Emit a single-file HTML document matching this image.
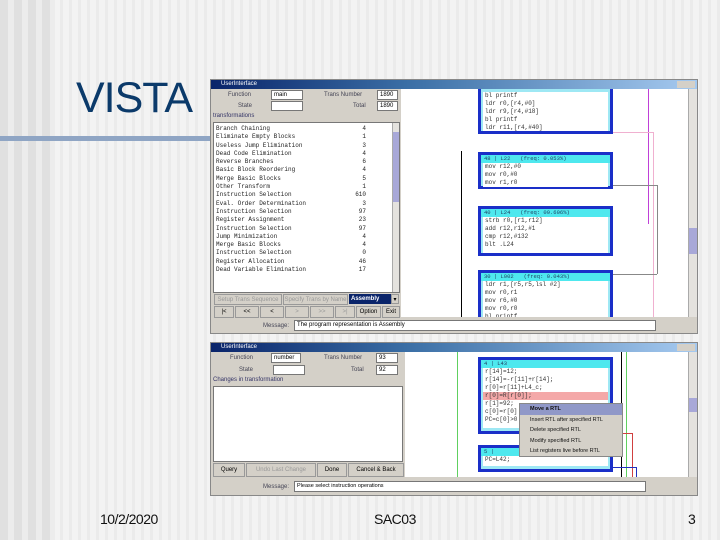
<!DOCTYPE html>
<html><head><meta charset="utf-8"><style>
*{margin:0;padding:0;box-sizing:border-box}
body{width:720px;height:540px;overflow:hidden;position:relative;font-family:"Liberation Sans",sans-serif;
background:repeating-linear-gradient(90deg,#f3f3f3 0 6px,#ebebeb 6px 9px);}
.lstrip{position:absolute;left:0;top:0;width:55px;height:540px;background:repeating-linear-gradient(90deg,#e0e0e0 0 8px,#ececec 8px 14px)}
.a{position:absolute}
.win{position:absolute;background:#d4d0c8;border:1px solid #888}
.tb{position:absolute;left:0;right:0;top:0;height:9px;background:linear-gradient(90deg,#0a246a,#3a6ea5 40%,#a6caf0);color:#fff;font-size:6px;line-height:9px;padding-left:10px}
.lb{position:absolute;font-size:6px;color:#445;white-space:nowrap}
.box{position:absolute;background:#fff;border:1px solid #777;font-size:6px;line-height:9px;padding-left:2px}
.list{position:absolute;background:#fff;border:1px solid #777;font-family:"Liberation Mono",monospace;font-size:6px;line-height:8.3px;color:#222;padding:2px 0 0 2px;overflow:hidden}
.list div{display:flex;justify-content:space-between;width:150px}
.sb{position:absolute;background:#e4e2de;border-left:1px solid #aaa}
.btn{position:absolute;background:#d4d0c8;border:1px solid #999;font-size:6px;text-align:center;color:#999;line-height:10px}
.blk{position:absolute;border:3px solid #1a2fc8;background:#9ee8f4}
.blk .h{height:8px;background:#4ee8ee;font-size:5.5px;color:#246;line-height:8px;padding-left:3px;font-family:"Liberation Mono",monospace}
.blk .c{background:#fff;font-family:"Liberation Mono",monospace;font-size:6px;line-height:8px;color:#333;padding-left:2px;margin:0 2px 2px}
</style></head><body>
<div class="lstrip"></div>
<div class="a" style="left:76px;top:74px;font-size:43px;color:#0b3a6a;letter-spacing:-1px">VISTA</div>
<div class="a" style="left:0;top:136px;width:211px;height:5px;background:#8fa5c4"></div>

<!-- TOP WINDOW -->
<div class="win" style="left:210px;top:79px;width:488px;height:255px">
<div class="tb">UserInterface<span style="position:absolute;right:2px;top:1px;width:18px;height:7px;background:#d4d0c8"></span></div>
<div class="lb" style="left:17px;top:12px">Function</div><div class="box" style="left:60px;top:10px;width:32px;height:10px">main</div>
<div class="lb" style="left:113px;top:12px">Trans Number</div><div class="box" style="left:166px;top:10px;width:21px;height:10px">1890</div>
<div class="lb" style="left:27px;top:23px">State</div><div class="box" style="left:60px;top:21px;width:32px;height:10px"></div>
<div class="lb" style="left:142px;top:23px">Total</div><div class="box" style="left:166px;top:21px;width:21px;height:10px">1890</div>
<div class="lb" style="left:2px;top:33px;color:#336">transformations</div>
<div class="list" style="left:2px;top:42px;width:187px;height:171px">
<div><span>Branch Chaining</span><span>4</span></div><div><span>Eliminate Empty Blocks</span><span>1</span></div><div><span>Useless Jump Elimination</span><span>3</span></div><div><span>Dead Code Elimination</span><span>4</span></div><div><span>Reverse Branches</span><span>6</span></div><div><span>Basic Block Reordering</span><span>4</span></div><div><span>Merge Basic Blocks</span><span>5</span></div><div><span>Other Transform</span><span>1</span></div><div><span>Instruction Selection</span><span>610</span></div><div><span>Eval. Order Determination</span><span>3</span></div><div><span>Instruction Selection</span><span>97</span></div><div><span>Register Assignment</span><span>23</span></div><div><span>Instruction Selection</span><span>97</span></div><div><span>Jump Minimization</span><span>4</span></div><div><span>Merge Basic Blocks</span><span>4</span></div><div><span>Instruction Selection</span><span>0</span></div><div><span>Register Allocation</span><span>46</span></div><div><span>Dead Variable Elimination</span><span>17</span></div>
</div>
<div class="sb" style="left:181px;top:43px;width:7px;height:169px"><div style="position:absolute;top:9px;left:0;width:6px;height:70px;background:#a8a8d8"></div></div>
<div class="btn" style="left:3px;top:214px;width:68px;height:11px">Setup Trans Sequence</div>
<div class="btn" style="left:72px;top:214px;width:65px;height:11px">Specify Trans by Name</div>
<div class="a" style="left:138px;top:214px;width:42px;height:10px;background:#0a246a;color:#fff;font-size:6px;font-weight:bold;line-height:10px;padding-left:2px">Assembly</div>
<div class="btn" style="left:180px;top:214px;width:8px;height:10px;color:#000">▾</div>
<div class="btn" style="left:3px;top:226px;width:20px;height:12px;color:#000">|&lt;</div>
<div class="btn" style="left:24px;top:226px;width:24px;height:12px;color:#000">&lt;&lt;</div>
<div class="btn" style="left:49px;top:226px;width:24px;height:12px;color:#000">&lt;</div>
<div class="btn" style="left:74px;top:226px;width:24px;height:12px">&gt;</div>
<div class="btn" style="left:99px;top:226px;width:24px;height:12px">&gt;&gt;</div>
<div class="btn" style="left:124px;top:226px;width:20px;height:12px">&gt;|</div>
<div class="btn" style="left:145px;top:226px;width:25px;height:12px;color:#000">Option</div>
<div class="btn" style="left:171px;top:226px;width:18px;height:12px;color:#000">Exit</div>
<div class="lb" style="left:52px;top:243px">Message:</div>
<div class="box" style="left:83px;top:240px;width:362px;height:11px;font-size:6px">The program representation is Assembly</div>
<!-- graph -->
<div class="a" style="left:190px;top:9px;width:287px;height:228px;background:#fff;overflow:hidden">
 <div class="a" style="left:60px;top:62px;width:1px;height:170px;background:#000"></div>
 <div class="a" style="left:247px;top:0;width:1px;height:135px;background:#c040d8"></div>
 <div class="a" style="left:77px;top:43px;width:175px;height:1px;background:#f0b0d0"></div>
 <div class="a" style="left:252px;top:43px;width:1px;height:190px;background:#f0b0d0"></div>
 <div class="a" style="left:200px;top:96px;width:56px;height:1px;background:#888"></div>
 <div class="a" style="left:256px;top:96px;width:1px;height:89px;background:#888"></div>
 <div class="a" style="left:200px;top:185px;width:56px;height:1px;background:#888"></div>
 <div class="a" style="left:200px;top:123px;width:12px;height:41px;border:1px solid #000;border-left:none"></div>
 <div class="blk" style="left:77px;top:-3px;width:135px;height:48px"><div class="c" style="margin-top:3px;height:39px">bl printf<br>ldr r0,[r4,#0]<br>ldr r9,[r4,#18]<br>bl printf<br>ldr r11,[r4,#40]</div></div>
 <div class="blk" style="left:77px;top:63px;width:135px;height:37px"><div class="h">48 | L22 &nbsp; (freq: 0.053%)</div><div class="c" style="height:24px">mov r12,#0<br>mov r0,#0<br>mov r1,r0</div></div>
 <div class="blk" style="left:77px;top:117px;width:135px;height:50px"><div class="h">40 | L24 &nbsp; (freq: 09.606%)</div><div class="c" style="height:36px">strb r0,[r1,r12]<br>add r12,r12,#1<br>cmp r12,#132<br>blt .L24</div></div>
 <div class="blk" style="left:77px;top:181px;width:135px;height:60px"><div class="h">30 | L002 &nbsp; (freq: 0.043%)</div><div class="c" style="height:48px">ldr r1,[r5,r5,lsl #2]<br>mov r0,r1<br>mov r6,#0<br>mov r0,r0<br>bl printf</div></div>
</div>
<div class="sb" style="left:477px;top:9px;width:9px;height:228px"><div style="position:absolute;top:139px;width:8px;height:26px;background:#a8a8d8"></div></div>
</div>

<!-- BOTTOM WINDOW -->
<div class="win" style="left:210px;top:342px;width:488px;height:154px">
<div class="tb">UserInterface<span style="position:absolute;right:2px;top:1px;width:18px;height:7px;background:#d4d0c8"></span></div>
<div class="lb" style="left:19px;top:12px">Function</div><div class="box" style="left:60px;top:10px;width:30px;height:10px">number</div>
<div class="lb" style="left:113px;top:12px">Trans Number</div><div class="box" style="left:165px;top:10px;width:22px;height:10px">93</div>
<div class="lb" style="left:28px;top:24px">State</div><div class="box" style="left:62px;top:22px;width:32px;height:10px"></div>
<div class="lb" style="left:140px;top:24px">Total</div><div class="box" style="left:165px;top:22px;width:22px;height:10px">92</div>
<div class="lb" style="left:2px;top:34px;color:#336">Changes in transformation</div>
<div class="a" style="left:2px;top:43px;width:190px;height:76px;background:#fff;border:1px solid #777"></div>
<div class="btn" style="left:2px;top:120px;width:32px;height:14px;color:#000;line-height:13px">Query</div>
<div class="btn" style="left:35px;top:120px;width:70px;height:14px;line-height:13px">Undo Last Change</div>
<div class="btn" style="left:106px;top:120px;width:30px;height:14px;color:#000;line-height:13px">Done</div>
<div class="btn" style="left:137px;top:120px;width:56px;height:14px;color:#000;line-height:13px">Cancel &amp; Back</div>
<div class="lb" style="left:52px;top:141px">Message:</div>
<div class="box" style="left:83px;top:138px;width:352px;height:11px;font-size:5.5px">Please select instruction operations</div>
<div class="a" style="left:194px;top:9px;width:283px;height:125px;background:#fff;overflow:hidden">
 <div class="a" style="left:52px;top:0;width:1px;height:125px;background:#60d060"></div>
 <div class="a" style="left:216px;top:0;width:1px;height:125px;background:#000"></div>
 <div class="a" style="left:221px;top:0;width:1px;height:125px;background:#60d060"></div>
 <div class="a" style="left:206px;top:81px;width:22px;height:44px;border:1px solid #d04040;border-bottom:none;border-left:none"></div>
 <div class="a" style="left:206px;top:115px;width:26px;height:10px;border:1px solid #2030c0;border-bottom:none;border-left:none"></div>
 <div class="blk" style="left:73px;top:5px;width:135px;height:77px"><div class="h">4 | L43</div><div class="c" style="height:60px">r[14]=12;<br>r[14]=-r[11]+r[14];<br>r[0]=r[11]+L4_c;<br><span style="display:block;background:#f4a8a8;margin-left:-2px;padding-left:2px">r[0]=R[r[0]];</span>r[1]=92;<br>c[0]=r[0]<br>PC=c[0]&gt;0</div></div>
 <div class="blk" style="left:73px;top:93px;width:135px;height:27px"><div class="h">5 |</div><div class="c" style="height:10px">PC=L42;</div></div>
</div>
<div class="sb" style="left:477px;top:9px;width:9px;height:125px"><div style="position:absolute;top:46px;width:8px;height:14px;background:#a8a8d8"></div></div>
<div class="a" style="left:308px;top:60px;width:104px;height:54px;background:#d4d0c8;border:1px solid #888;font-size:5.5px;color:#111;line-height:10.6px">
 <div style="background:#9098c8;padding-left:10px;font-weight:bold">Move a RTL</div>
 <div style="padding-left:10px">Insert RTL after specified RTL</div>
 <div style="padding-left:10px">Delete specified RTL</div>
 <div style="padding-left:10px">Modify specified RTL</div>
 <div style="padding-left:10px">List registers live before RTL</div>
</div>
</div>

<div class="a" style="left:100px;top:511px;font-size:14px;color:#111;letter-spacing:-0.5px">10/2/2020</div>
<div class="a" style="left:374px;top:511px;font-size:14px;color:#111;letter-spacing:-0.5px">SAC03</div>
<div class="a" style="left:688px;top:511px;font-size:14px;color:#111">3</div>
</body></html>
